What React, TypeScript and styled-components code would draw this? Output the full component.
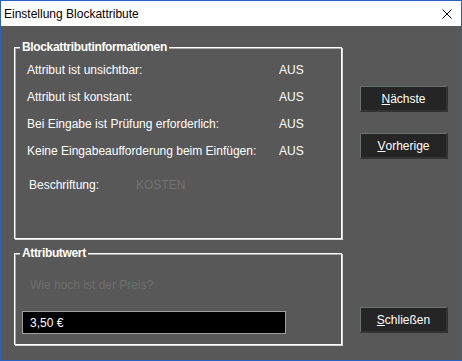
import React from 'react';
import styled, {createGlobalStyle} from "styled-components";

const GlobalStyle = createGlobalStyle`
  html, body {
    margin: 0;
    padding: 0;
    background: #585858;
  }
  body {
    font-family: "Liberation Sans", Arial, sans-serif;
    font-size: 12px;
  }
`

type RowType = {
    label: string
    value: string
}

const rows: RowType[] = [
    {label: 'Attribut ist unsichtbar:', value: 'AUS'},
    {label: 'Attribut ist konstant:', value: 'AUS'},
    {label: 'Bei Eingabe ist Prüfung erforderlich:', value: 'AUS'},
    {label: 'Keine Eingabeaufforderung beim Einfügen:', value: 'AUS'},
]

const CloseIcon = () => (
    <svg width="10" height="10" viewBox="0 0 10 10">
        <path d="M0.5 0.5 L9.5 9.5 M9.5 0.5 L0.5 9.5" stroke="#000" strokeWidth="1" fill="none"/>
    </svg>
)

type ButtonPropsType = {
    accessKey: string
    rest: string
    top: number
}

const DialogButton = (props: ButtonPropsType) => {
    return (
        <Button $top={props.top}>
            <u>{props.accessKey}</u>{props.rest}
        </Button>
    )
}

export default function App() {
    return (
        <>
            <GlobalStyle/>
            <Window>
                <TitleBar>
                    <Title>Einstellung Blockattribute</Title>
                    <CloseButton><CloseIcon/></CloseButton>
                </TitleBar>
                <Body>
                    <LeftColumn>
                        <Group $height={199}>
                            <Legend>Blockattributinformationen</Legend>
                            <InfoGrid>
                                {rows.map(r => (
                                    <React.Fragment key={r.label}>
                                        <Label>{r.label}</Label>
                                        <Value>{r.value}</Value>
                                    </React.Fragment>
                                ))}
                            </InfoGrid>
                            <CaptionRow>
                                <CaptionLabel>Beschriftung:</CaptionLabel>
                                <Disabled>KOSTEN</Disabled>
                            </CaptionRow>
                        </Group>
                        <Group $height={99}>
                            <Legend>Attributwert</Legend>
                            <Prompt>Wie hoch ist der Preis?</Prompt>
                            <Input defaultValue="3,50 €"/>
                        </Group>
                    </LeftColumn>
                    <RightColumn>
                        <DialogButton accessKey="N" rest="ächste" top={60}/>
                        <DialogButton accessKey="V" rest="orherige" top={21}/>
                        <DialogButton accessKey="S" rest="chließen" top={148}/>
                    </RightColumn>
                </Body>
            </Window>
        </>
    );
}

const Window = styled.div`
  width: 462px;
  height: 361px;
  box-sizing: border-box;
  border: 1px solid #2a62c2;
  background: #585858;
  display: flex;
  flex-direction: column;
`
const TitleBar = styled.div`
  height: 25px;
  background: #fff;
  display: flex;
  align-items: center;
  justify-content: space-between;
  padding: 0 9px 0 3px;
`
const Title = styled.div`
  color: #000;
  font-size: 12px;
`
const CloseButton = styled.div`
  display: flex;
  width: 10px;
  height: 10px;
`
const Body = styled.div`
  display: flex;
  padding-left: 13px;
`
const LeftColumn = styled.div`
  width: 328px;
  display: flex;
  flex-direction: column;
`
const Group = styled.fieldset<{ $height: number }>`
  margin: 14px 0 0 0;
  padding: 0;
  height: ${props => props.$height}px;
  box-sizing: border-box;
  border: 1px solid #fff;
  box-shadow: inset 1px 1px 0 #a8a8a8, 1px 1px 0 #d8d8d8;
  & + & {
    margin-top: 7px;
  }
`
const Legend = styled.legend`
  margin-left: 5px;
  padding: 0 2px;
  color: #fff;
  font-weight: bold;
  font-size: 12px;
  line-height: 14px;
  letter-spacing: -0.35px;
  background: #585858;
`
const InfoGrid = styled.div`
  display: grid;
  grid-template-columns: 252px auto;
  grid-auto-rows: 27px;
  align-items: center;
  padding: 2px 0 0 12px;
  color: #fff;
`
const Label = styled.div``
const Value = styled.div``
const CaptionRow = styled.div`
  display: flex;
  align-items: center;
  height: 27px;
  margin-top: 7px;
  padding-left: 14px;
  color: #fff;
`
const CaptionLabel = styled.div`
  width: 107px;
`
const Disabled = styled.div`
  color: #727272;
`
const Prompt = styled.div`
  color: #6e6e6e;
  margin: 18px 0 0 15px;
  line-height: 14px;
`
const Input = styled.input`
  display: block;
  margin: 19px 0 0 7px;
  width: 264px;
  height: 23px;
  box-sizing: border-box;
  background: #000;
  color: #fff;
  border: 1px solid #a0a0a0;
  padding: 0 7px;
  font-family: "Liberation Sans", Arial, sans-serif;
  font-size: 12px;
  outline: none;
`
const RightColumn = styled.div`
  display: flex;
  flex-direction: column;
  margin-left: 18px;
`
const Button = styled.div<{ $top: number }>`
  margin-top: ${props => props.$top}px;
  width: 88px;
  height: 26px;
  box-sizing: border-box;
  background: #252525;
  border-top: 1px solid #6b7171;
  border-left: 1px solid #6b7171;
  border-right: 2px solid #333;
  border-bottom: 2px solid #333;
  display: flex;
  align-items: center;
  justify-content: center;
  color: #fff;
  font-size: 12px;
`
